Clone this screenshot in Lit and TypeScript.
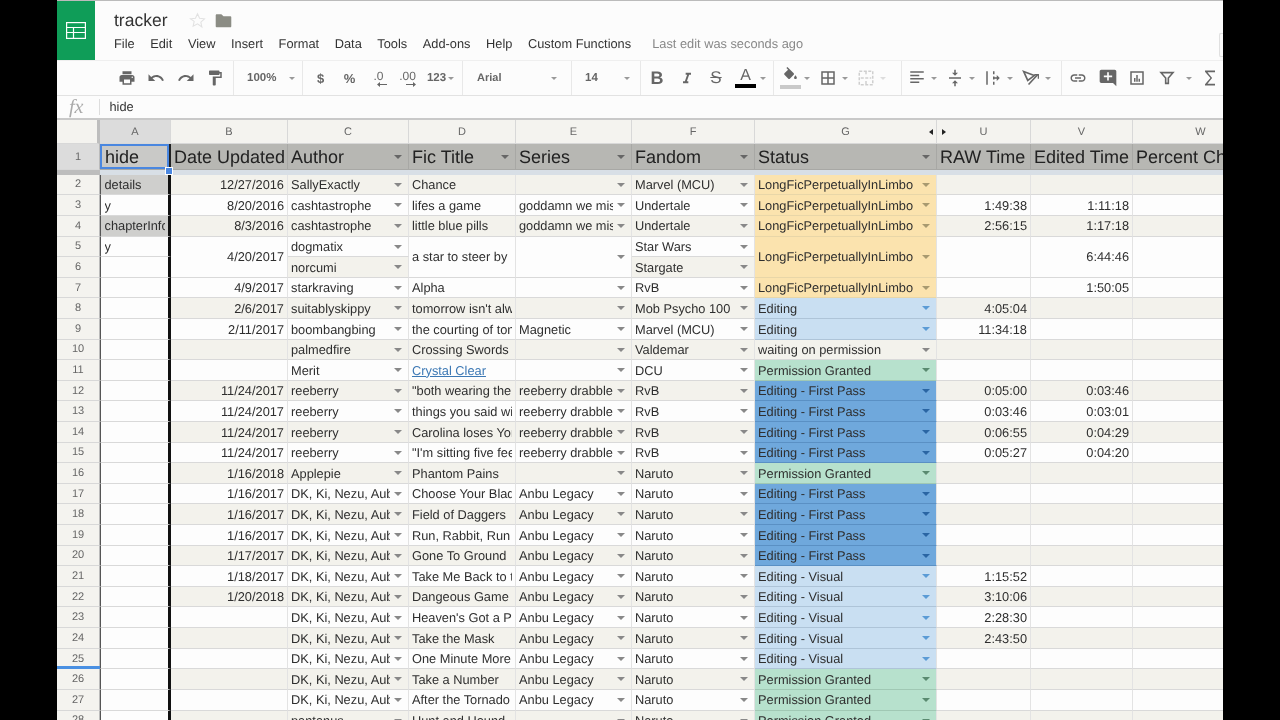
import { LitElement, html, css, svg } from "lit";
import { customElement } from "lit/decorators.js";

type Row = {
  n: number;
  a?: string;
  b?: string;
  c?: string;
  d?: string;
  e?: string;
  f?: string;
  g?: string;
  u?: string;
  v?: string;
  link?: boolean;
};

const LONG = "LongFicPerpetuallyInLimbo";
const EDIT = "Editing";
const FIRST = "Editing - First Pass";
const VISUAL = "Editing - Visual";
const GRANTED = "Permission Granted";
const DK = "DK, Ki, Nezu, Aubrey";
const MISS = "goddamn we miss you";
const DRAB = "reeberry drabbles";
const ANBU = "Anbu Legacy";

const ROWS: Row[] = [
  { n: 2, a: "details", b: "12/27/2016", c: "SallyExactly", d: "Chance", f: "Marvel (MCU)", g: LONG },
  { n: 3, a: "y", b: "8/20/2016", c: "cashtastrophe", d: "lifes a game", e: MISS, f: "Undertale", g: LONG, u: "1:49:38", v: "1:11:18" },
  { n: 4, a: "chapterInfo", b: "8/3/2016", c: "cashtastrophe", d: "little blue pills", e: MISS, f: "Undertale", g: LONG, u: "2:56:15", v: "1:17:18" },
  { n: 5, a: "y", b: "4/20/2017", c: "dogmatix", d: "a star to steer by", f: "Star Wars", g: LONG, v: "6:44:46" },
  { n: 6, c: "norcumi", f: "Stargate" },
  { n: 7, b: "4/9/2017", c: "starkraving", d: "Alpha", f: "RvB", g: LONG, v: "1:50:05" },
  { n: 8, b: "2/6/2017", c: "suitablyskippy", d: "tomorrow isn't always", f: "Mob Psycho 100", g: EDIT, u: "4:05:04" },
  { n: 9, b: "2/11/2017", c: "boombangbing", d: "the courting of tony", e: "Magnetic", f: "Marvel (MCU)", g: EDIT, u: "11:34:18" },
  { n: 10, c: "palmedfire", d: "Crossing Swords", f: "Valdemar", g: "waiting on permission" },
  { n: 11, c: "Merit", d: "Crystal Clear", f: "DCU", g: GRANTED, link: true },
  { n: 12, b: "11/24/2017", c: "reeberry", d: "\"both wearing the ", e: DRAB, f: "RvB", g: FIRST, u: "0:05:00", v: "0:03:46" },
  { n: 13, b: "11/24/2017", c: "reeberry", d: "things you said with", e: DRAB, f: "RvB", g: FIRST, u: "0:03:46", v: "0:03:01" },
  { n: 14, b: "11/24/2017", c: "reeberry", d: "Carolina loses York", e: DRAB, f: "RvB", g: FIRST, u: "0:06:55", v: "0:04:29" },
  { n: 15, b: "11/24/2017", c: "reeberry", d: "\"I'm sitting five feet", e: DRAB, f: "RvB", g: FIRST, u: "0:05:27", v: "0:04:20" },
  { n: 16, b: "1/16/2018", c: "Applepie", d: "Phantom Pains", f: "Naruto", g: GRANTED },
  { n: 17, b: "1/16/2017", c: DK, d: "Choose Your Blade", e: ANBU, f: "Naruto", g: FIRST },
  { n: 18, b: "1/16/2017", c: DK, d: "Field of Daggers", e: ANBU, f: "Naruto", g: FIRST },
  { n: 19, b: "1/16/2017", c: DK, d: "Run, Rabbit, Run", e: ANBU, f: "Naruto", g: FIRST },
  { n: 20, b: "1/17/2017", c: DK, d: "Gone To Ground", e: ANBU, f: "Naruto", g: FIRST },
  { n: 21, b: "1/18/2017", c: DK, d: "Take Me Back to the", e: ANBU, f: "Naruto", g: VISUAL, u: "1:15:52" },
  { n: 22, b: "1/20/2018", c: DK, d: "Dangeous Game", e: ANBU, f: "Naruto", g: VISUAL, u: "3:10:06" },
  { n: 23, c: DK, d: "Heaven's Got a Plan", e: ANBU, f: "Naruto", g: VISUAL, u: "2:28:30" },
  { n: 24, c: DK, d: "Take the Mask", e: ANBU, f: "Naruto", g: VISUAL, u: "2:43:50" },
  { n: 25, c: DK, d: "One Minute More", e: ANBU, f: "Naruto", g: VISUAL },
  { n: 26, c: DK, d: "Take a Number", e: ANBU, f: "Naruto", g: GRANTED },
  { n: 27, c: DK, d: "After the Tornado", e: ANBU, f: "Naruto", g: GRANTED },
  { n: 28, c: "pantanus", d: "Hunt and Hound", f: "Naruto", g: GRANTED },
];

const STATUS: Record<string, string> = {
  [LONG]: "st-long",
  [EDIT]: "st-edit",
  [VISUAL]: "st-edit",
  [FIRST]: "st-first",
  [GRANTED]: "st-granted",
};

const LETTERS = ["A", "B", "C", "D", "E", "F", "G", "U", "V", "W"];
const HEADS = ["Date Updated", "Author", "Fic Title", "Series", "Fandom", "Status", "RAW Time", "Edited Time", "Percent Change"];
const MENU = ["File", "Edit", "View", "Insert", "Format", "Data", "Tools", "Add-ons", "Help", "Custom Functions"];

const icon = (d: string, size = 18) => html`<svg width=${size} height=${size} viewBox="0 0 24 24" fill="#666"><path d=${d}></path></svg>`;

const ICONS = {
  print: "M19 8H5c-1.66 0-3 1.34-3 3v6h4v4h12v-4h4v-6c0-1.66-1.34-3-3-3zm-3 11H8v-5h8v5zm3-7c-.55 0-1-.45-1-1s.45-1 1-1 1 .45 1 1-.45 1-1 1zm-1-9H6v4h12V3z",
  undo: "M12.5 8c-2.65 0-5.05.99-6.9 2.6L2 7v9h9l-3.62-3.62c1.39-1.16 3.16-1.88 5.12-1.88 3.54 0 6.55 2.31 7.6 5.5l2.37-.78C21.08 11.03 17.15 8 12.5 8z",
  redo: "M18.4 10.6C16.55 8.99 14.15 8 11.5 8c-4.65 0-8.58 3.03-9.96 7.22L3.9 16c1.05-3.19 4.05-5.5 7.6-5.5 1.95 0 3.73.72 5.12 1.88L13 16h9V7l-3.6 3.6z",
  paint: "M18 4V3c0-.55-.45-1-1-1H5c-.55 0-1 .45-1 1v4c0 .55.45 1 1 1h12c.55 0 1-.45 1-1V6h1v4H9v11c0 .55.45 1 1 1h2c.55 0 1-.45 1-1v-9h8V4h-3z",
  italic: "M10 4v3h2.21l-3.42 10H6v3h8v-3h-2.21l3.42-10H18V4z",
  fill: "M16.56 8.94L7.62 0 6.21 1.41l2.38 2.38-5.15 5.15c-.59.59-.59 1.54 0 2.12l5.5 5.5c.59.59 1.53.59 2.12 0l5.5-5.5c.59-.58.59-1.53 0-2.12zM19 11.5s-2 2.17-2 3.5c0 1.1.9 2 2 2s2-.9 2-2c0-1.33-2-3.5-2-3.5z",
  borders: "M3 3v18h18V3H3zm8 16H5v-6h6v6zm0-8H5V5h6v6zm8 8h-6v-6h6v6zm0-8h-6V5h6v6z",
  align: "M3 3h18v2H3zM3 7.500h12v2H3zM3 12h18v2H3zM3 16.500h12v2H3z",
  valign: "M8 19h3v4h2v-4h3l-4-4-4 4zm8-14h-3V1h-2v4H8l4 4 4-4zM4 11v2h16v-2H4z",
  wrap: "M3 3h2v18H3zM12 3h2v4h-2zM12 17h2v4h-2zM12 10h2v1h3V8l4 4-4 4v-3h-3v1h-2z",
  link: "M3.9 12c0-1.71 1.39-3.1 3.1-3.1h4V7H7c-2.76 0-5 2.24-5 5s2.24 5 5 5h4v-1.9H7c-1.71 0-3.1-1.39-3.1-3.1zM8 13h8v-2H8v2zm9-6h-4v1.9h4c1.71 0 3.1 1.39 3.1 3.1s-1.39 3.1-3.1 3.1h-4V17h4c2.76 0 5-2.24 5-5s-2.24-5-5-5z",
  comment: "M21.99 4c0-1.1-.89-2-1.99-2H4c-1.1 0-2 .9-2 2v12c0 1.1.9 2 2 2h14l4 4-.01-18zM17 11h-4v4h-2v-4H7V9h4V5h2v4h4v2z",
  chart: "M3 3h18v18H3zM5 5v14h14V5zM8 12h2v5H8zM11 8h2v9h-2zM14 13h2v4h-2z",
  sigma: "M18 3H6v1.500l6.500 7.500L6 19.500V21h12v-2H9l5.500-7L9 5h9z",
};

const merge = svg`<svg width="18" height="18" viewBox="0 0 24 24" fill="none" stroke="#cfcfcf" stroke-width="2" stroke-dasharray="4 2"><rect x="3" y="3" width="18" height="18"></rect><path d="M5 12h14M12 3v5M12 16v5"></path></svg>`;
const rotate = svg`<svg width="20" height="18" viewBox="0 0 24 22" fill="none" stroke="#666" stroke-width="2"><path d="M3 3l13 5-8 6z"></path><path d="M9 19L20 7"></path><path d="M16 7h5v5" stroke-width="1.5"></path></svg>`;
const filter = svg`<svg width="16" height="16" viewBox="0 0 24 24" fill="none" stroke="#666" stroke-width="2.4"><path d="M3 4h18l-7 8v8h-4v-8z"></path></svg>`;
const arrow = (dir: string) => svg`<svg class="dec-arrow" width="10" height="5" viewBox="0 0 10 5" fill="#666"><path d=${dir === "l" ? "M0 2.5L3 0v2h7v1H3v2z" : "M10 2.5L7 0v2H0v1h7v2z"}></path></svg>`;

@customElement("app-root")
export class AppRoot extends LitElement {
  static styles = css`
    :host {
      display: block;
      width: 1280px;
      height: 720px;
      background: #000;
      overflow: hidden;
      font-family: "Liberation Sans", Arial, sans-serif;
      text-rendering: geometricPrecision;
    }
    .app {
      width: 1166px;
      height: 720px;
      margin-left: 57px;
      background: #fcfcfc;
      overflow: hidden;
      display: flex;
      flex-direction: column;
      position: relative;
      filter: blur(0.3px);
    }

    /* title bar */
    .top {
      height: 60px;
      flex: none;
      display: flex;
      border-top: 1px solid #bbb;
      box-sizing: border-box;
    }
    .logo {
      width: 38px;
      background: #0f9d58;
      display: flex;
      align-items: center;
      justify-content: center;
    }
    .titles {
      padding-left: 19px;
    }
    .title-row {
      display: flex;
      align-items: center;
      box-sizing: border-box;
      height: 35px;
      padding-top: 3px;
      font-size: 17.5px;
      color: #333;
    }
    .star {
      margin-left: 22px;
      margin-right: 9px;
    }
    .menu {
      display: flex;
      gap: 15.6px;
      font-size: 12.8px;
      color: #333;
      line-height: 15px;
    }
    .saved {
      color: #888;
      margin-left: 5.5px;
    }
    .share {
      margin-left: auto;
      margin-top: 32px;
      width: 3px;
      height: 22px;
      border: 1px solid #e0e0e0;
      border-right: none;
      border-radius: 2px 0 0 2px;
    }

    /* toolbar */
    .toolbar {
      height: 36px;
      flex: none;
      display: flex;
      box-sizing: border-box;
      border-top: 1px solid #efefef;
      border-bottom: 1px solid #e2e2e2;
      font-size: 11.5px;
      font-weight: bold;
      color: #666;
    }
    .grp {
      flex: none;
      display: flex;
      align-items: center;
      box-sizing: border-box;
      border-right: 1px solid #e8e8e8;
    }
    .g-hist { width: 177px; padding-left: 57.5px; gap: 5.5px; }
    .g-zoom { width: 69px; padding-left: 13px; gap: 11px; }
    .g-num { width: 160px; padding-left: 5.5px; gap: 5px; }
    .g-font { width: 109px; padding: 0 12px 0 14px; justify-content: space-between; font-size: 11px; }
    .g-size { width: 69px; padding: 0 8px 0 13px; justify-content: space-between; }
    .g-text { width: 133px; padding-left: 4px; gap: 5.5px; }
    .g-fill { width: 128px; padding-left: 4px; gap: 4px; }
    .g-align { width: 160px; padding-left: 3px; gap: 4px; }
    .g-ins { flex: 1; padding-left: 4px; gap: 5.5px; border-right: none; }
    .ic {
      width: 24px;
      height: 24px;
      flex: none;
      display: flex;
      align-items: center;
      justify-content: center;
      position: relative;
    }
    .pair {
      display: flex;
      align-items: center;
    }
    .car {
      width: 10px;
      height: 24px;
      flex: none;
      display: flex;
      align-items: center;
      justify-content: center;
    }
    .car::after {
      content: "";
      border: 3px solid transparent;
      border-top: 3px solid #999;
      border-bottom: none;
    }
    .car.off::after {
      border-top-color: #ddd;
    }
    .car.push {
      margin: 0 -1.5px 0 5px;
    }
    .car.tight {
      margin-left: -3px;
    }
    .sym {
      font-size: 13px;
    }
    .dec {
      flex-direction: column;
      font-size: 12px;
      line-height: 12px;
      font-weight: normal;
    }
    .dec-arrow {
      margin-left: 6px;
    }
    .b {
      font-size: 18px;
    }
    .s {
      font-size: 17px;
      font-weight: normal;
      text-decoration: line-through;
    }
    .col-a {
      flex-direction: column;
      font-size: 16px;
      font-weight: normal;
      line-height: 15px;
    }
    .bar {
      width: 21px;
      height: 4px;
      background: #000;
      margin-top: 1px;
    }
    .col-f {
      flex-direction: column;
    }
    .bar-f {
      width: 21px;
      height: 4px;
      background: #c9c9c9;
      margin-top: 1px;
    }

    /* formula bar */
    .fbar {
      height: 22px;
      flex: none;
      display: flex;
      align-items: center;
      font-size: 12.8px;
      color: #333;
      border-bottom: 2px solid #c9c9c9;
    }
    .fx {
      width: 42.5px;
      box-sizing: border-box;
      padding-left: 12px;
      font-family: "Liberation Serif", serif;
      font-style: italic;
      font-size: 20px;
      color: #aaa;
      border-right: 1px solid #ddd;
      line-height: 16px;
    }
    .fval {
      padding-left: 10px;
      margin-top: -2px;
    }

    /* sheet */
    .sheet {
      flex: 1;
      overflow: hidden;
      position: relative;
    }
    .grid {
      display: grid;
      width: 1212px;
      grid-template-columns: 43px 71px 117px 121px 107px 116px 123px 182px 94px 102px 136px;
      grid-template-rows: 24px 26px 4.7px;
      grid-auto-rows: 20.62px;
      font-size: 12.8px;
      color: #2e2e2e;
    }
    .cl {
      background: #f4f3ef;
      color: #666;
      font-size: 11px;
      display: flex;
      align-items: center;
      justify-content: center;
      border-right: 1px solid #d8d8d8;
      border-bottom: 1px solid #d8d8d8;
      position: relative;
    }
    .corner {
      border-right: 3px solid #bdbdbd;
    }
    .cl.on {
      background: #dcdcdc;
    }
    .tri-l, .tri-r {
      position: absolute;
      top: 9px;
      border: 3.5px solid transparent;
    }
    .tri-l {
      right: 3px;
      border-right: 4px solid #222;
      border-left: none;
    }
    .tri-r {
      left: 5px;
      border-left: 4px solid #222;
      border-right: none;
    }
    .rh {
      background: #f4f3ef;
      color: #666;
      font-size: 11px;
      display: flex;
      align-items: center;
      justify-content: center;
      border-bottom: 1px solid #d8d8d8;
      border-right: 1px solid #bbb;
    }
    .rh.on {
      background: #dcdcdc;
    }
    .h {
      background: #b7b7b3;
      font-size: 18px;
      color: #222;
      display: flex;
      align-items: center;
      padding: 1px 0 0 3px;
      overflow: hidden;
      white-space: nowrap;
      border-right: 1px solid #a8a8a5;
      border-bottom: 1px solid #a8a8a5;
    }
    .h .car {
      margin-left: auto;
      margin-right: 5px;
    }
    .h .car::after {
      border-top-color: #666;
      border-width: 4px;
      border-bottom: none;
    }
    .h.sel {
      background: #c9c9c7;
      box-shadow: inset 0 0 0 2px #4a87e0;
      border-right: 2px solid #222;
      padding-left: 5px;
    }
    .band-h {
      background: #bdbdbd;
    }
    .band {
      grid-column: 2 / -1;
      background: #d8dfe6;
    }
    .c {
      display: flex;
      align-items: center;
      padding: 0.5px 3px 0;
      min-width: 0;
      overflow: hidden;
      white-space: nowrap;
      box-sizing: border-box;
      background: #fdfdfd;
      border-right: 1px solid #e3e3e3;
      border-bottom: 1px solid #d9d9d9;
    }
    .c.alt {
      background: #f3f2ec;
    }
    .span2 {
      grid-row: span 2;
    }
    .right {
      justify-content: flex-end;
    }
    .txt {
      flex: 1;
      min-width: 0;
      overflow: hidden;
    }
    .right .txt {
      flex: none;
    }
    .arrow {
      flex: none;
      width: 0;
      height: 0;
      margin: 0 3px 0 4px;
      border: 4px solid transparent;
      border-top: 4px solid #888;
      border-bottom: none;
    }
    .a-col {
      border-left: 1.5px solid #555;
      border-right: 3px solid #111;
      background: #fdfdfd;
      padding-left: 3.5px;
    }
    .c.a-grey {
      background: #cfcfcd;
    }
    .link {
      color: #3c78b4;
      text-decoration: underline;
    }
    .st-long, .c.alt.st-long {
      background: #fbe3ae;
      border-bottom-color: #e8d6a8;
    }
    .st-edit, .c.alt.st-edit {
      background: #c9dff2;
      border-bottom-color: #aec4d8;
    }
    .st-first, .c.alt.st-first {
      background: #6fa8dc;
      border-bottom-color: #5a90c4;
    }
    .st-granted, .c.alt.st-granted {
      background: #b7e1cd;
      border-bottom-color: #a0c8b4;
    }
    .st-long .arrow { border-top-color: #a89a70; }
    .st-edit .arrow { border-top-color: #5b9bd5; }
    .st-first .arrow { border-top-color: #2a65a3; }
    .st-granted .arrow { border-top-color: #5a8a70; }
    .handle {
      position: absolute;
      left: 108px;
      top: 47px;
      width: 6px;
      height: 6px;
      background: #4a87e0;
      border: 1px solid #fff;
    }
    .drag {
      position: absolute;
      left: 0;
      top: 546px;
      width: 43px;
      height: 3px;
      background: #4a90e2;
    }
  `;

  private caret(extra = "") {
    return html`<span class="car ${extra}"></span>`;
  }

  private toolbar() {
    return html`
      <div class="toolbar">
        <div class="grp g-hist">
          <span class="ic">${icon(ICONS.print)}</span>
          <span class="ic">${icon(ICONS.undo)}</span>
          <span class="ic">${icon(ICONS.redo)}</span>
          <span class="ic">${icon(ICONS.paint)}</span>
        </div>
        <div class="grp g-zoom"><span>100%</span>${this.caret()}</div>
        <div class="grp g-num">
          <span class="ic sym">$</span>
          <span class="ic sym">%</span>
          <span class="ic dec">.0${arrow("l")}</span>
          <span class="ic dec">.00${arrow("r")}</span>
          <span class="pair"><span class="ic">123</span>${this.caret("tight")}</span>
        </div>
        <div class="grp g-font"><span>Arial</span>${this.caret()}</div>
        <div class="grp g-size"><span>14</span>${this.caret()}</div>
        <div class="grp g-text">
          <span class="ic b">B</span>
          <span class="ic">${icon(ICONS.italic, 16)}</span>
          <span class="ic s">S</span>
          <span class="pair"><span class="ic col-a">A<span class="bar"></span></span>${this.caret()}</span>
        </div>
        <div class="grp g-fill">
          <span class="pair"><span class="ic col-f">${icon(ICONS.fill, 17)}<span class="bar-f"></span></span>${this.caret()}</span>
          <span class="pair"><span class="ic">${icon(ICONS.borders)}</span>${this.caret()}</span>
          <span class="pair"><span class="ic">${merge}</span>${this.caret("off")}</span>
        </div>
        <div class="grp g-align">
          <span class="pair"><span class="ic">${icon(ICONS.align)}</span>${this.caret()}</span>
          <span class="pair"><span class="ic">${icon(ICONS.valign)}</span>${this.caret()}</span>
          <span class="pair"><span class="ic">${icon(ICONS.wrap)}</span>${this.caret()}</span>
          <span class="pair"><span class="ic">${rotate}</span>${this.caret()}</span>
        </div>
        <div class="grp g-ins">
          <span class="ic">${icon(ICONS.link)}</span>
          <span class="ic">${icon(ICONS.comment, 20)}</span>
          <span class="ic">${icon(ICONS.chart)}</span>
          <span class="pair"><span class="ic">${filter}</span>${this.caret("push")}</span>
          <span class="ic">${icon(ICONS.sigma, 20)}</span>
        </div>
      </div>
    `;
  }

  private cell(text: string | undefined, cls: string, arrow: boolean, isLink = false) {
    return html`<div class="c ${cls}">
      <span class="txt ${isLink ? "link" : ""}">${text ?? ""}</span>
      ${arrow ? html`<span class="arrow"></span>` : ""}
    </div>`;
  }

  private row(r: Row) {
    const alt = r.n % 2 === 0 ? "alt" : "";
    const acls = "a-col" + (r.a === "details" || r.a === "chapterInfo" ? " a-grey" : "");
    const head = html`<div class="rh">${r.n}</div>`;
    if (r.n === 6) {
      return html`${head}${this.cell("", "a-col", false)}${this.cell(r.c, alt, true)}${this.cell(r.f, alt, true)}`;
    }
    const sp = r.n === 5 ? "span2" : "";
    return html`${head}
      ${this.cell(r.a, acls, false)}
      ${this.cell(r.b, `${alt} ${sp} right`, false)}
      ${this.cell(r.c, alt, true)}
      ${this.cell(r.d, `${alt} ${sp}`, false, r.link)}
      ${this.cell(r.e, `${alt} ${sp}`, true)}
      ${this.cell(r.f, alt, true)}
      ${this.cell(r.g, `${alt} ${sp} ${STATUS[r.g ?? ""] ?? ""}`, true)}
      ${this.cell(r.u, `${alt} ${sp} right`, false)}
      ${this.cell(r.v, `${alt} ${sp} right`, false)}
      ${this.cell("", `${alt} ${sp}`, false)}`;
  }

  render() {
    return html`
      <div class="app">
        <div class="top">
          <div class="logo">
            <svg width="20" height="17" viewBox="0 0 20 17" fill="none" stroke="#fff" stroke-width="1.2">
              <rect x="0.6" y="0.6" width="18.8" height="15.8"></rect>
              <path d="M0.6 5.5h18.8M0.6 10.5h18.8M7.5 5.5v11"></path>
            </svg>
          </div>
          <div class="titles">
            <div class="title-row">
              <span>tracker</span>
              <svg class="star" width="17" height="17" viewBox="0 0 24 24" fill="none" stroke="#e2e2e2" stroke-width="1.5">
                <path d="M12 2.5l2.9 6.4 7 .7-5.2 4.7 1.5 6.9L12 16.8l-6.2 3.4 1.5-6.9L2.1 9.6l7-.7z"></path>
              </svg>
              <svg width="17" height="15" viewBox="0 0 24 20" fill="#8b8c84">
                <path d="M9 1H2.500C1.400 1 1 1.900 1 3v15c0 1.100.9 1.500 1.500 1.500h19c1.100 0 1.500-.9 1.500-1.500V5.500C23 4.400 22.100 4 21.500 4H12z"></path>
              </svg>
            </div>
            <div class="menu">
              ${MENU.map((m) => html`<span>${m}</span>`)}
              <span class="saved">Last edit was seconds ago</span>
            </div>
          </div>
          <div class="share"></div>
        </div>
        ${this.toolbar()}
        <div class="fbar"><span class="fx">fx</span><span class="fval">hide</span></div>
        <div class="sheet">
          <div class="grid">
            <div class="cl corner"></div>
            ${LETTERS.map(
              (l) => html`<div class="cl ${l === "A" ? "on" : ""}">
                ${l}${l === "G" ? html`<span class="tri-l"></span>` : ""}${l === "U" ? html`<span class="tri-r"></span>` : ""}
              </div>`
            )}
            <div class="rh on">1</div>
            <div class="h sel">hide</div>
            ${HEADS.map(
              (h, i) => html`<div class="h">
                ${h}${i >= 1 && i <= 5 ? html`<span class="car"></span>` : ""}
              </div>`
            )}
            <div class="band-h"></div>
            <div class="band"></div>
            ${ROWS.map((r) => this.row(r))}
          </div>
          <div class="handle"></div>
          <div class="drag"></div>
        </div>
      </div>
    `;
  }
}

declare global {
  interface HTMLElementTagNameMap {
    "app-root": AppRoot;
  }
}
